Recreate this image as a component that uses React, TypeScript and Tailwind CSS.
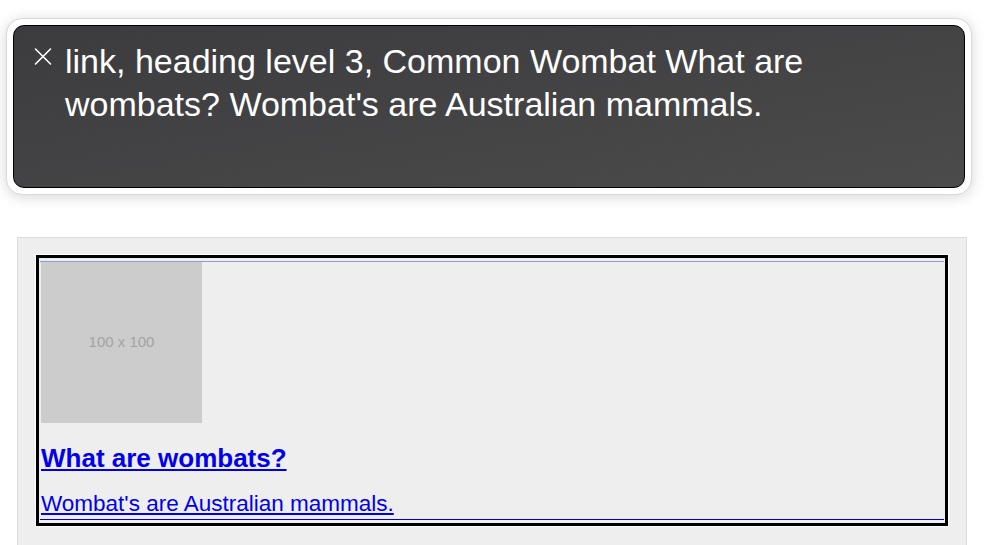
const speech = [
  "link, heading level 3, Common Wombat What are",
  "wombats? Wombat's are Australian mammals.",
];

function CloseIcon() {
  return (
    <svg width="18" height="17" viewBox="0 0 18 17" className="mt-[8px] shrink-0" fill="none">
      <path d="M1.5 1L16.5 16M16.5 1L1.5 16" stroke="white" strokeWidth="1.6" strokeLinecap="round" />
    </svg>
  );
}

function SpeechViewer() {
  return (
    <div className="ml-[6px] mt-[18px] w-[966px] rounded-[16px] border border-[#d9d9d9] bg-white p-[6px] shadow-[0_2px_14px_rgba(0,0,0,0.16)]">
      <div className="flex h-[163px] items-start gap-[13px] rounded-[11px] border border-black bg-gradient-to-br from-[#3c3c3f] to-[#4b4b4b] pl-[20px] pt-[14px]">
        <CloseIcon />
        <div className="font-['Liberation_Sans',Arial,sans-serif] text-[34px] leading-[43px] text-white">
          {speech.map((line) => (
            <div key={line}>{line}</div>
          ))}
        </div>
      </div>
    </div>
  );
}

function Card() {
  return (
    <div className="ml-[17px] mt-[42px] h-[320px] w-[950px] border border-[#dcdcdc] bg-[#eeeeee] px-[17px] pt-[16px]">
      <div className="border border-white">
        <a href="#" className="block border-[3px] border-black px-[1px] pt-[3px] pb-[3px] font-['Liberation_Sans',Arial,sans-serif] text-[#0000ee]">
          <div className="border-y border-t-[#8d9be8] border-b-[#0000cc] pl-[1px] pb-[2px]">
            <div className="flex h-[161px] w-[161px] items-center justify-center bg-[#cccccc] text-[15px] text-[#a3a3a3]">
              100 x 100
            </div>
            <h3 className="mt-[20px] text-[26px] font-bold leading-[30px] underline">What are wombats?</h3>
            <p className="mt-[18px] text-[22.5px] leading-[26px] underline">Wombat's are Australian mammals.</p>
          </div>
        </a>
      </div>
    </div>
  );
}

export default function App() {
  return (
    <div className="h-[545px] w-[1000px] overflow-hidden bg-white">
      <SpeechViewer />
      <Card />
    </div>
  );
}
